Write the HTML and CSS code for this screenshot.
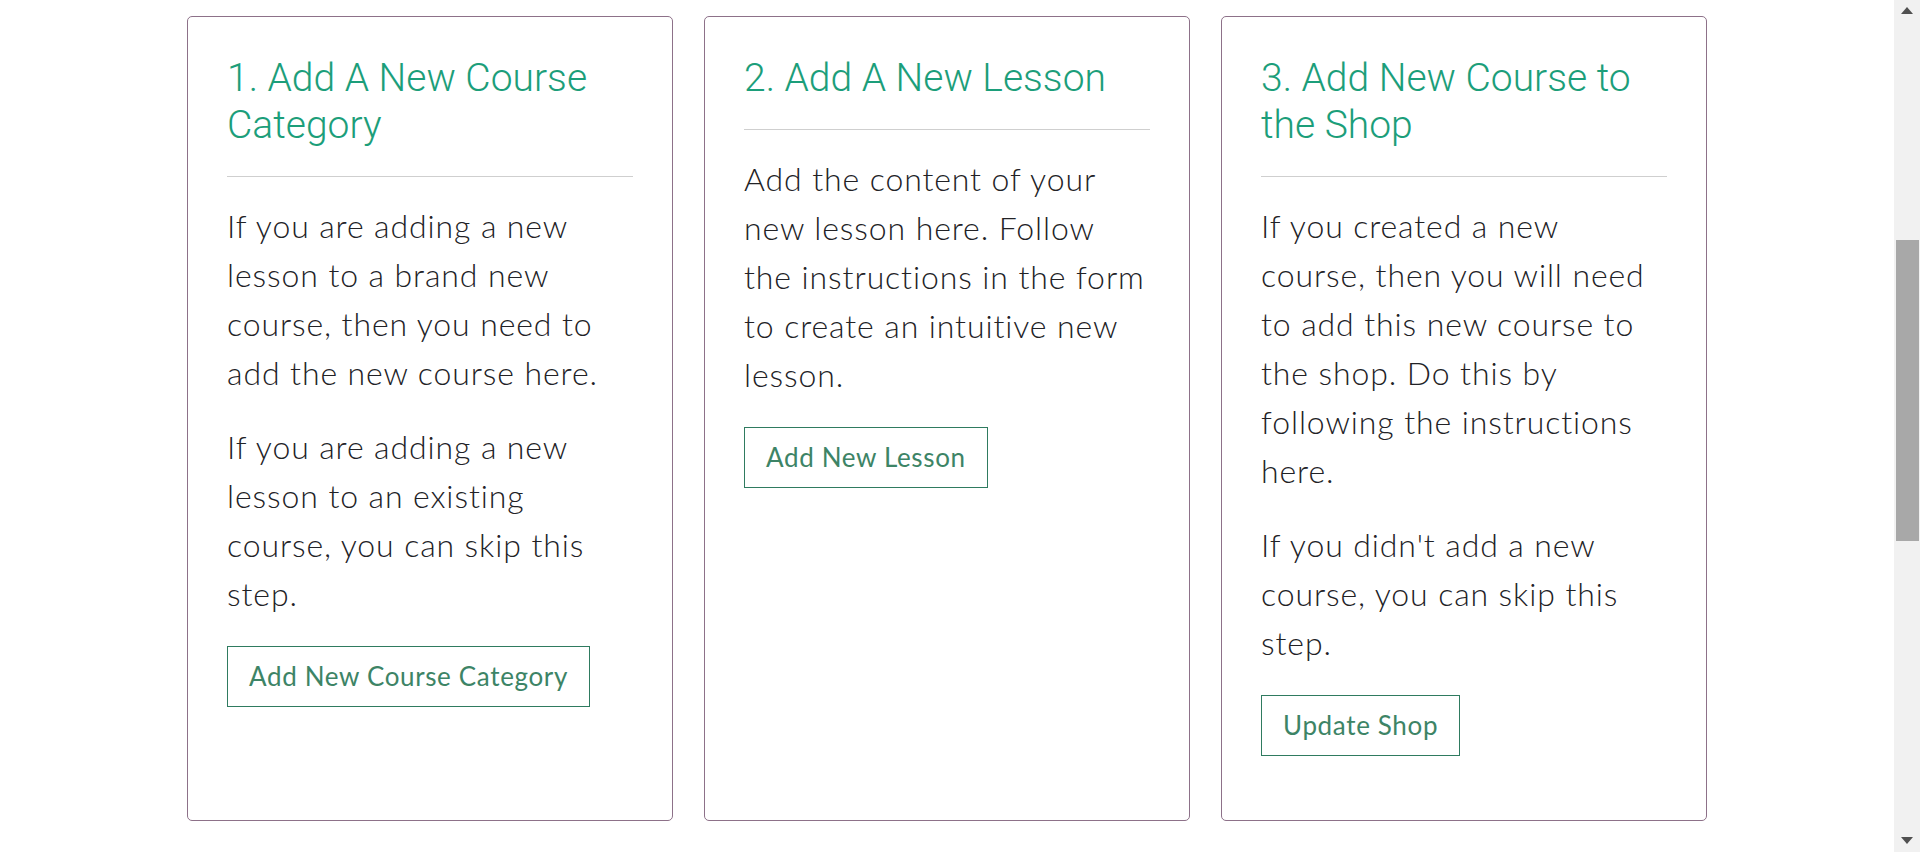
FILE: index.html
```html
<!DOCTYPE html>
<html lang="en">
<head>
<meta charset="utf-8">
<title>Add a new course</title>
<link rel="stylesheet" href="styles.css">
</head>
<body>
<div class="page">
  <main class="content">
    <div class="steps">
      <section class="card">
        <h2 class="card-title">1. Add A New Course Category</h2>
        <hr class="rule">
        <p class="text">If you are adding a new lesson to a brand new course, then you need to add the new course here.</p>
        <p class="text">If you are adding a new lesson to an existing course, you can skip this step.</p>
        <a class="btn" href="#">Add New Course Category</a>
      </section>
      <section class="card">
        <h2 class="card-title">2. Add A New Lesson</h2>
        <hr class="rule">
        <p class="text">Add the content of your new lesson here. Follow the instructions in the form to create an intuitive new lesson.</p>
        <a class="btn" href="#">Add New Lesson</a>
      </section>
      <section class="card">
        <h2 class="card-title">3. Add New Course to the Shop</h2>
        <hr class="rule">
        <p class="text">If you created a new course, then you will need to add this new course to the shop. Do this by following the instructions here.</p>
        <p class="text">If you didn't add a new course, you can skip this step.</p>
        <a class="btn" href="#">Update Shop</a>
      </section>
    </div>
  </main>
  <aside class="scrollbar">
    <div class="sb-arrow sb-up"></div>
    <div class="sb-track"><div class="sb-thumb"></div></div>
    <div class="sb-arrow sb-down"></div>
  </aside>
</div>
</body>
</html>
```

FILE: styles.css
```css
html, body {
  margin: 0;
  padding: 0;
  height: 100%;
  background: #fff;
  overflow: hidden;
}
.page {
  display: flex;
  height: 852px;
}
.content {
  flex: 1;
  padding-top: 16px;
}
.steps {
  width: 1520px;
  margin: 0 auto;
  display: grid;
  grid-template-columns: repeat(3, 1fr);
  column-gap: 31px;
}
.card {
  height: 805px;
  box-sizing: border-box;
  border: 1px solid #8d7189;
  border-radius: 5px;
  padding: 38px 39px 40px 39px;
  display: flex;
  flex-direction: column;
  align-items: flex-start;
}
.card-title {
  margin: 0;
  font-family: Roboto, "Liberation Sans", sans-serif;
  font-weight: 300;
  font-size: 39px;
  line-height: 46.8px;
  color: #1c9e7a;
}
.rule {
  align-self: stretch;
  margin: 27px 0 0 0;
  border: 0;
  border-top: 1px solid #cfcfcf;
  height: 0;
}
.text {
  margin: 24px 0 0 0;
  padding-right: 5px;
  font-family: Lato, "Open Sans", sans-serif;
  font-weight: 300;
  font-size: 32px;
  line-height: 49px;
  letter-spacing: 0.9px;
  color: #222226;
}
.text + .text {
  margin-top: 25px;
}
.btn {
  margin-top: 28px;
  display: inline-block;
  border: 1px solid #2f7b60;
  padding: 12px 21px;
  font-family: Lato, "Open Sans", sans-serif;
  font-weight: 400;
  font-size: 26px;
  line-height: 35px;
  letter-spacing: 0.65px;
  color: #3d8466;
  text-decoration: none;
}
.scrollbar {
  width: 26px;
  background: #f1f1f1;
  display: flex;
  flex-direction: column;
  align-items: center;
}
.sb-arrow {
  width: 0;
  height: 0;
  border-left: 6px solid transparent;
  border-right: 6px solid transparent;
}
.sb-up {
  margin-top: 7px;
  border-bottom: 7px solid #505050;
}
.sb-down {
  margin-bottom: 8px;
  border-top: 7px solid #505050;
}
.sb-track {
  flex: 1;
  align-self: stretch;
  padding: 0 1px 0 2px;
}
.sb-thumb {
  margin-top: 226px;
  height: 301px;
  background: #a8a8a8;
}
```
